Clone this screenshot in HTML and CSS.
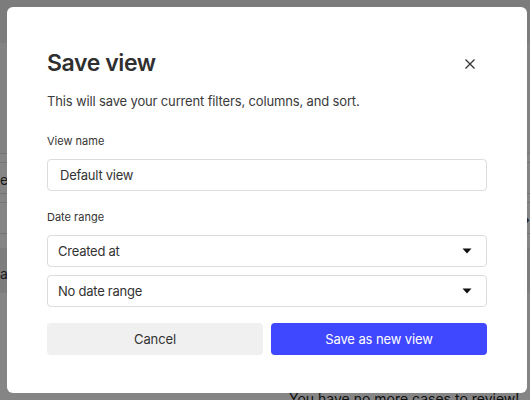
FILE: index.html
```html
<!DOCTYPE html>
<html lang="en">
<head>
<meta charset="utf-8">
<title>Save view</title>
<link rel="stylesheet" href="styles.css">
</head>
<body>
<div class="page">
  <div class="page-header"></div>
  <div class="page-toolbar"></div>
  <div class="table">
    <div class="row row-thin"></div>
    <div class="row row-cell"><span class="cell">ef</span><span class="cell-end"></span></div>
    <div class="row row-thin"></div>
    <div class="row row-cell"><span class="cell"></span><span class="cell-end">›</span></div>
    <div class="row-space"></div>
    <div class="row-band"><span class="cell">at</span></div>
  </div>
  <div class="empty">You have no more cases to review!</div>
</div>

<div class="overlay">
  <div class="modal" role="dialog" aria-labelledby="modal-title">
    <div class="modal-head">
      <h1 class="modal-title" id="modal-title">Save view</h1>
      <button class="close" aria-label="Close">
        <svg width="12" height="12" viewBox="0 0 12 12"><path d="M1.5 1.5 L10.5 10.5 M10.5 1.5 L1.5 10.5" stroke="#333" stroke-width="1.3" fill="none"/></svg>
      </button>
    </div>
    <p class="modal-sub">This will save your current filters, columns, and sort.</p>

    <label class="field-label">View name</label>
    <div class="input">Default view</div>

    <label class="field-label field-label-second">Date range</label>
    <div class="select">
      <span>Created at</span>
      <svg class="caret" width="10" height="6" viewBox="0 0 10 6"><path d="M0.5 0.5 H9.5 L5 5.5 Z" fill="#111"/></svg>
    </div>
    <div class="select select-second">
      <span>No date range</span>
      <svg class="caret" width="10" height="6" viewBox="0 0 10 6"><path d="M0.5 0.5 H9.5 L5 5.5 Z" fill="#111"/></svg>
    </div>

    <div class="actions">
      <button class="btn btn-cancel">Cancel</button>
      <button class="btn btn-primary">Save as new view</button>
    </div>
  </div>
</div>
</body>
</html>
```

FILE: styles.css
```css
* { box-sizing: border-box; }

html, body {
  margin: 0;
  padding: 0;
}

body {
  width: 530px;
  height: 400px;
  overflow: hidden;
  font-family: Inter, "Liberation Sans", sans-serif;
  color: #333;
  background: #fff;
}

/* background page */
.page {
  width: 530px;
  display: flex;
  flex-direction: column;
}

.page > *,
.table > * {
  flex-shrink: 0;
}

.page-header {
  height: 43px;
  background: #eeeeee;
}

.page-toolbar {
  height: 110px;
  background: #fafafa;
}

.table {
  display: flex;
  flex-direction: column;
}

.row {
  display: flex;
  justify-content: space-between;
  align-items: center;
  border-top: 1px solid #dedede;
  font-size: 14px;
}

.row-thin {
  height: 9px;
}

.row-cell {
  height: 31px;
  padding-top: 2px;
}

.row-space {
  height: 15px;
  border-top: 1px solid #dedede;
}

.row-band {
  height: 45px;
  background: #efefef;
  display: flex;
  align-items: center;
  padding-top: 6px;
  font-size: 14px;
}

.cell {
  padding-left: 0;
}

.cell-end {
  padding-right: 0;
  font-size: 16px;
}

.empty {
  margin-top: 96px;
  padding-left: 289px;
  font-size: 14px;
  line-height: 20px;
  color: #222;
}

/* overlay + modal */
.overlay {
  position: fixed;
  inset: 0;
  background: rgba(0, 0, 0, 0.48);
  padding: 7px 3px 0 7px;
}

.modal {
  width: 520px;
  background: #fff;
  border-radius: 6px;
  padding: 40px 40px 38px 40px;
  display: flex;
  flex-direction: column;
}

.modal-head {
  display: flex;
  justify-content: space-between;
  align-items: center;
  height: 32px;
}

.modal-title {
  margin: 0;
  font-size: 23px;
  line-height: 32px;
  font-weight: 600;
  color: #2f2f2f;
  letter-spacing: -0.4px;
}

.close {
  border: 0;
  background: none;
  padding: 0;
  width: 16px;
  height: 16px;
  display: flex;
  align-items: center;
  justify-content: center;
  margin-right: 9px;
  margin-top: 2px;
}

.modal-sub {
  margin: 12px 0 0 0;
  font-size: 13px;
  line-height: 20px;
  color: #3a3a3a;
  letter-spacing: -0.15px;
}

.field-label {
  display: block;
  margin-top: 22px;
  font-size: 11px;
  line-height: 16px;
  color: #333;
}

.field-label-second {
  margin-top: 18px;
}

.input,
.select {
  margin-top: 10px;
  height: 32px;
  border: 1px solid #dcdcdc;
  border-radius: 4px;
  font-size: 13px;
  letter-spacing: -0.25px;
  color: #333;
  display: flex;
  align-items: center;
}

.input {
  padding-left: 12px;
}

.select {
  padding: 0 14px 0 10px;
  justify-content: space-between;
}

.select-second {
  margin-top: 8px;
}

.caret {
  display: block;
}

.actions {
  margin-top: 16px;
  display: grid;
  grid-template-columns: 1fr 1fr;
  gap: 8px;
}

.btn {
  height: 32px;
  border: 0;
  border-radius: 4px;
  font-family: Inter, "Liberation Sans", sans-serif;
  font-size: 13px;
  letter-spacing: -0.1px;
  padding: 0;
}

.btn-cancel {
  background: #f0f0f0;
  color: #333;
}

.btn-primary {
  background: #4048ff;
  color: #fff;
}
```
